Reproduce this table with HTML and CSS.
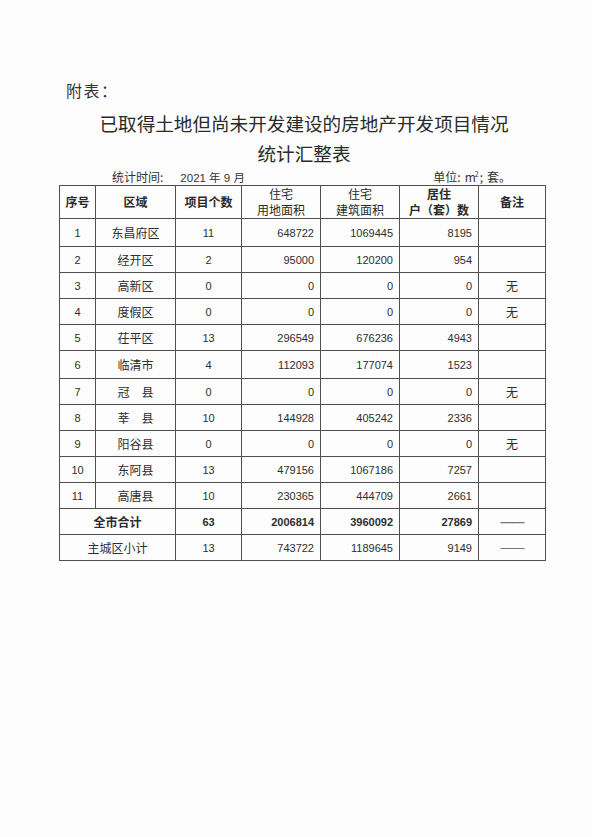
FILE: index.html
```html
<!DOCTYPE html>
<html lang="zh">
<head>
<meta charset="utf-8">
<link rel="stylesheet" href="styles.css">
</head>
<body>
<div class="page">
  <div class="attach">附表：</div>
  <div class="title">
    <div class="title-line">已取得土地但尚未开发建设的房地产开发项目情况</div>
    <div class="title-line">统计汇整表</div>
  </div>
  <div class="meta">
    <div class="meta-left"><span class="meta-label">统计时间:</span><span class="meta-date">2021 年 9 月</span></div>
    <div class="meta-right"><span>单位:</span><span class="unit">m<sup class="sq">2</sup>;</span><span class="unit">套。</span></div>
  </div>
  <table class="stats">
    <colgroup>
      <col class="c1"><col class="c2"><col class="c3"><col class="c4"><col class="c5"><col class="c6"><col class="c7">
    </colgroup>
    <thead>
      <tr class="head">
        <th class="bold">序号</th>
        <th class="bold">区域</th>
        <th class="bold">项目个数</th>
        <th class="two">住宅<br>用地面积</th>
        <th class="two">住宅<br>建筑面积</th>
        <th class="two bold">居住<br>户（套）数</th>
        <th class="bold">备注</th>
      </tr>
    </thead>
    <tbody>
      <tr class="tall"><td class="ctr num">1</td><td class="ctr zh">东昌府区</td><td class="ctr num">11</td><td class="r num">648722</td><td class="r num">1069445</td><td class="r num">8195</td><td class="ctr zh"></td></tr>
      <tr><td class="ctr num">2</td><td class="ctr zh">经开区</td><td class="ctr num">2</td><td class="r num">95000</td><td class="r num">120200</td><td class="r num">954</td><td class="ctr zh"></td></tr>
      <tr><td class="ctr num">3</td><td class="ctr zh">高新区</td><td class="ctr num">0</td><td class="r num">0</td><td class="r num">0</td><td class="r num">0</td><td class="ctr zh">无</td></tr>
      <tr><td class="ctr num">4</td><td class="ctr zh">度假区</td><td class="ctr num">0</td><td class="r num">0</td><td class="r num">0</td><td class="r num">0</td><td class="ctr zh">无</td></tr>
      <tr><td class="ctr num">5</td><td class="ctr zh">茌平区</td><td class="ctr num">13</td><td class="r num">296549</td><td class="r num">676236</td><td class="r num">4943</td><td class="ctr zh"></td></tr>
      <tr class="tall"><td class="ctr num">6</td><td class="ctr zh">临清市</td><td class="ctr num">4</td><td class="r num">112093</td><td class="r num">177074</td><td class="r num">1523</td><td class="ctr zh"></td></tr>
      <tr><td class="ctr num">7</td><td class="ctr zh">冠　县</td><td class="ctr num">0</td><td class="r num">0</td><td class="r num">0</td><td class="r num">0</td><td class="ctr zh">无</td></tr>
      <tr><td class="ctr num">8</td><td class="ctr zh">莘　县</td><td class="ctr num">10</td><td class="r num">144928</td><td class="r num">405242</td><td class="r num">2336</td><td class="ctr zh"></td></tr>
      <tr><td class="ctr num">9</td><td class="ctr zh">阳谷县</td><td class="ctr num">0</td><td class="r num">0</td><td class="r num">0</td><td class="r num">0</td><td class="ctr zh">无</td></tr>
      <tr><td class="ctr num">10</td><td class="ctr zh">东阿县</td><td class="ctr num">13</td><td class="r num">479156</td><td class="r num">1067186</td><td class="r num">7257</td><td class="ctr zh"></td></tr>
      <tr><td class="ctr num">11</td><td class="ctr zh">高唐县</td><td class="ctr num">10</td><td class="r num">230365</td><td class="r num">444709</td><td class="r num">2661</td><td class="ctr zh"></td></tr>
      <tr class="total"><td class="ctr zh" colspan="2">全市合计</td><td class="ctr num">63</td><td class="r num">2006814</td><td class="r num">3960092</td><td class="r num">27869</td><td class="ctr dash">——</td></tr>
      <tr><td class="ctr zh" colspan="2">主城区小计</td><td class="ctr num">13</td><td class="r num">743722</td><td class="r num">1189645</td><td class="r num">9149</td><td class="ctr dash">——</td></tr>
    </tbody>
  </table>
</div>
</body>
</html>
```

FILE: styles.css
```css
html, body {
  margin: 0;
  padding: 0;
  background: #fdfdfd;
}

body {
  font-family: "Noto Sans CJK SC", "Noto Sans", sans-serif;
  color: #2e2e2e;
}

.page {
  width: 486px;
  margin-left: 59px;
  padding-top: 79px;
}

.attach {
  font-size: 16px;
  line-height: 22px;
  height: 22px;
  padding-left: 7px;
  letter-spacing: 1.5px;
  color: #333;
}

.title {
  margin-top: 7px;
  padding-left: 4px;
  text-align: center;
  font-size: 18.6px;
  line-height: 30px;
  color: #2a2a2a;
}

.title-line {
  height: 30px;
  white-space: nowrap;
}

.meta {
  margin-top: 2px;
  height: 14px;
  line-height: 14px;
  font-size: 12px;
  display: flex;
  justify-content: space-between;
  padding-left: 53px;
  padding-right: 34px;
  color: #333;
}

.meta-date {
  margin-left: 17px;
  font-family: "Liberation Sans", "Noto Sans CJK SC", sans-serif;
  font-size: 11.5px;
}

.meta-right {
  white-space: nowrap;
  display: flex;
}

.unit {
  margin-left: 4px;
}

.sq {
  font-size: 7px;
  vertical-align: 5px;
  line-height: 0;
  margin-left: -1px;
  margin-right: 1px;
}

.stats {
  margin-top: 1px;
  width: 486px;
  border-collapse: collapse;
  table-layout: fixed;
  font-family: "Liberation Sans", "Noto Sans CJK SC", sans-serif;
  color: #2e2e2e;
}

.c1 { width: 36px; }
.c2 { width: 80px; }
.c3 { width: 66px; }
.c4 { width: 79px; }
.c5 { width: 79px; }
.c6 { width: 79px; }
.c7 { width: 67px; }

.stats th,
.stats td {
  border: 1px solid #505050;
  padding: 0;
  overflow: hidden;
  white-space: nowrap;
}

.stats th {
  font-family: "Noto Sans CJK SC", sans-serif;
  font-size: 12px;
  font-weight: 400;
  line-height: 16px;
  text-align: center;
  vertical-align: middle;
  color: #2a2a2a;
}

.stats th.bold {
  font-weight: 700;
}

.head {
  height: 33px;
}

.stats tbody tr {
  height: 26px;
}

.stats tbody tr.tall {
  height: 28px;
}

.ctr {
  text-align: center;
}

.r {
  text-align: right;
  padding-right: 6px !important;
}

.num {
  font-size: 11px;
}

.zh {
  font-family: "Noto Sans CJK SC", sans-serif;
  font-size: 12px;
}

.total td {
  font-weight: 700;
}

.dash {
  font-family: "Liberation Sans", sans-serif;
  font-size: 12.5px;
  color: #777;
  letter-spacing: -1px;
}
```
